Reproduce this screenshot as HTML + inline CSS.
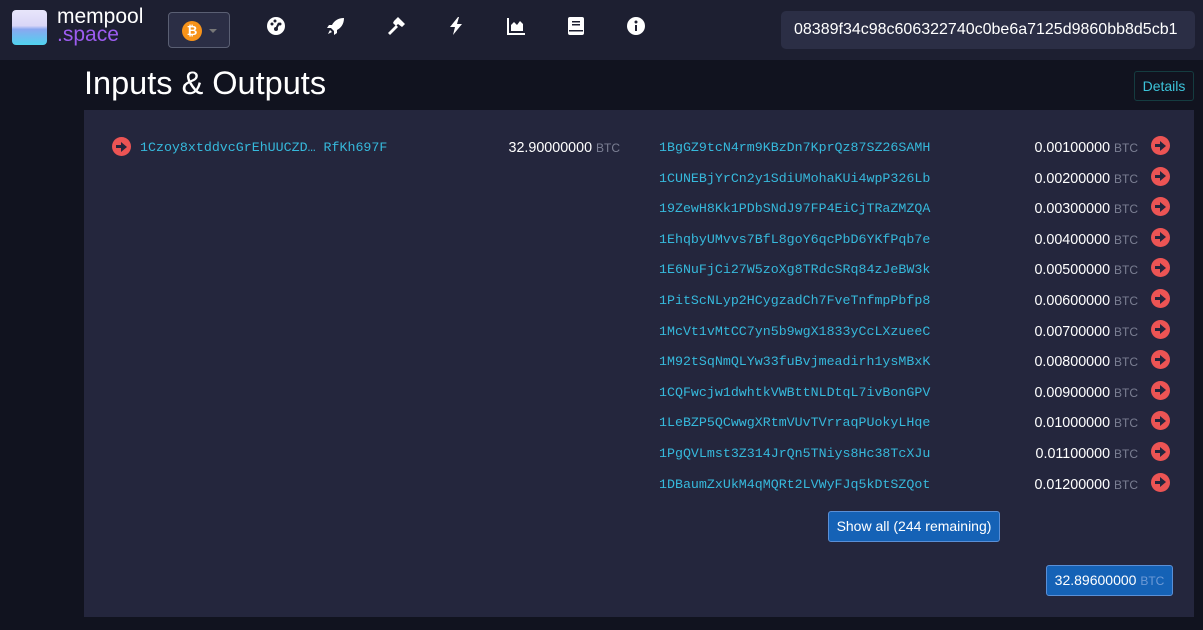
<!DOCTYPE html>
<html><head><meta charset="utf-8"><style>
*{box-sizing:border-box;margin:0;padding:0}
body{width:1203px;height:630px;background:#11131f;font-family:"Liberation Sans",sans-serif;color:#fff;position:relative;overflow:hidden}
.nav{position:absolute;left:0;top:0;width:1203px;height:60px;background:#1d1f31}
.logo{position:absolute;left:12px;top:10px;width:35px;height:35px;border-radius:4px;background:linear-gradient(#e8e6fb 0%,#d9d6f7 45%,#8aa8f0 55%,#4fd3ef 100%)}
.lt{position:absolute;left:57px;top:8px;font-size:21px;line-height:18px;color:#fff}
.lt span{color:#9d5cf0;display:block}
.sel{position:absolute;left:168px;top:12px;width:62px;height:36px;border:1px solid #5a5f73;border-radius:4px;background:#2b2e45}
.btc{position:absolute;left:13px;top:8px;width:20px;height:20px;border-radius:50%;background:#f7931a;color:#fff;font-size:13px;font-weight:bold;text-align:center;line-height:20px}
.car{position:absolute;left:40px;top:16px;border:4px solid transparent;border-top:4px solid #777;}
.ic{position:absolute;top:16px;width:20px;height:20px}
.search{position:absolute;left:781px;top:11px;width:414px;height:38px;background:#2b2e45;border-radius:5px;font-size:16px;line-height:38px;padding-left:13px;color:#fff}
h1{position:absolute;left:84px;top:65px;font-size:32.5px;font-weight:normal}
.det{position:absolute;left:1134px;top:71px;width:60px;height:30px;border:1px solid #153c40;border-radius:3px;color:#3cc3d9;font-size:14px;text-align:center;line-height:28px}
.box{position:absolute;left:84px;top:110px;width:1110px;height:507px;background:#24263d}
.row{position:absolute;height:20px;font-size:14.3px;line-height:20px}
.a{font-family:"Liberation Mono",monospace;font-size:13.3px;color:#36b9dc;position:absolute;white-space:nowrap}
.amt{position:absolute;right:0;white-space:nowrap;text-align:right}
.u{color:#7b7f93;font-size:12px}
.arr{position:absolute;width:19px;height:19px;border-radius:50%;background:#ec5454}
.arr:after{content:"";position:absolute;left:4px;top:8px;width:6px;height:3px;background:#24263d}
.arr:before{content:"";position:absolute;left:9px;top:4.5px;border:5px solid transparent;border-left:6px solid #24263d;border-right:0}
.b1{position:absolute;left:828px;top:511px;width:172px;height:31px;background:#1562b6;border:1px solid #5a8fd6;border-radius:3px;font-size:14px;text-align:center;line-height:29px}
.b2{position:absolute;left:1046px;top:565px;width:127px;height:31px;background:#1562b6;border:1px solid #5a8fd6;border-radius:3px;font-size:14px;text-align:center;line-height:29px}
.b2 .u{color:#6e9ad6}
</style></head><body>
<div class="nav">
<div class="logo"></div>
<div class="lt">mempool<span>.space</span></div>
<div class="sel"><div class="btc">₿</div><div class="car"></div></div>
<svg class="ic" style="left:266px" viewBox="0 0 20 20"><circle cx="10" cy="10" r="9" fill="#fff"/><circle cx="6" cy="8" r="1.5" fill="#1d1f31"/><circle cx="9" cy="5" r="1.5" fill="#1d1f31"/><circle cx="14" cy="8" r="1.5" fill="#1d1f31"/><path d="M10 13 L13 7" stroke="#1d1f31" stroke-width="2"/><circle cx="10" cy="13" r="2" fill="#1d1f31"/></svg>
<svg class="ic" style="left:326px" viewBox="0 0 20 20"><path d="M18 2 C12 2 8 5 6 9 L3 9 L1 12 L5 12 L8 15 L8 19 L11 17 L11 14 C15 12 18 8 18 2Z" fill="#fff"/><path d="M4 14 L2 18 L6 16Z" fill="#fff"/></svg>
<svg class="ic" style="left:386px" viewBox="0 0 20 20"><path d="M2 17 L10 9 L12 11 L4 19Z" fill="#fff"/><path d="M8 5 L12 1 L19 8 L16 11 L12 8 L10 10 L7 7Z" fill="#fff"/></svg>
<svg class="ic" style="left:446px" viewBox="0 0 20 20"><path d="M12 1 L4 11 L9 11 L7 19 L16 8 L11 8 L13 1Z" fill="#fff"/></svg>
<svg class="ic" style="left:506px" viewBox="0 0 20 20"><path d="M2 2 V18 H19" stroke="#fff" stroke-width="2" fill="none"/><path d="M5 15 L5 9 L8 6 L11 9 L14 5 L17 8 L17 15Z" fill="#fff"/></svg>
<svg class="ic" style="left:566px" viewBox="0 0 20 20"><rect x="2" y="1" width="16" height="18" rx="2" fill="#fff"/><rect x="6" y="5" width="8" height="1.5" fill="#1d1f31"/><rect x="6" y="8" width="8" height="1.5" fill="#1d1f31"/><rect x="3" y="14" width="14" height="1.5" fill="#1d1f31"/></svg>
<svg class="ic" style="left:626px" viewBox="0 0 20 20"><circle cx="10" cy="10" r="9" fill="#fff"/><circle cx="10" cy="6" r="1.5" fill="#1d1f31"/><rect x="9" y="9" width="2" height="6" fill="#1d1f31"/></svg>
<div class="search">08389f34c98c606322740c0be6a7125d9860bb8d5cb1</div>
</div>
<h1>Inputs &amp; Outputs</h1>
<div class="det">Details</div>
<div class="box"></div>
<div class="arr" style="left:112px;top:137px"></div>
<div class="a" style="left:140px;top:140px">1Czoy8xtddvcGrEhUUCZD… RfKh697F</div>
<div class="row" style="left:450px;top:138px;width:170px"><span class="amt">32.90000000 <span class="u">BTC</span></span></div>
<div id="outs"></div>
<div class="b1">Show all (244 remaining)</div>
<div class="b2">32.89600000 <span class="u">BTC</span></div>
<script>
var a=["1BgGZ9tcN4rm9KBzDn7KprQz87SZ26SAMH","1CUNEBjYrCn2y1SdiUMohaKUi4wpP326Lb","19ZewH8Kk1PDbSNdJ97FP4EiCjTRaZMZQA","1EhqbyUMvvs7BfL8goY6qcPbD6YKfPqb7e","1E6NuFjCi27W5zoXg8TRdcSRq84zJeBW3k","1PitScNLyp2HCygzadCh7FveTnfmpPbfp8","1McVt1vMtCC7yn5b9wgX1833yCcLXzueeC","1M92tSqNmQLYw33fuBvjmeadirh1ysMBxK","1CQFwcjw1dwhtkVWBttNLDtqL7ivBonGPV","1LeBZP5QCwwgXRtmVUvTVrraqPUokyLHqe","1PgQVLmst3Z314JrQn5TNiys8Hc38TcXJu","1DBaumZxUkM4qMQRt2LVWyFJq5kDtSZQot"];
var h="";
for(var i=0;i<12;i++){var y=137+i*30.6;var v=("0.0"+String(i+1).padStart(2,"0")+"00000");
h+='<div class="a" style="left:659px;top:'+(y+3)+'px">'+a[i]+'</div>';
h+='<div class="row" style="left:960px;top:'+(y+1)+'px;width:178px"><span class="amt">'+v+' <span class="u">BTC</span></span></div>';
h+='<div class="arr" style="left:1151px;top:'+(y-1)+'px"></div>';}
document.getElementById("outs").innerHTML=h;
</script>
</body></html>
